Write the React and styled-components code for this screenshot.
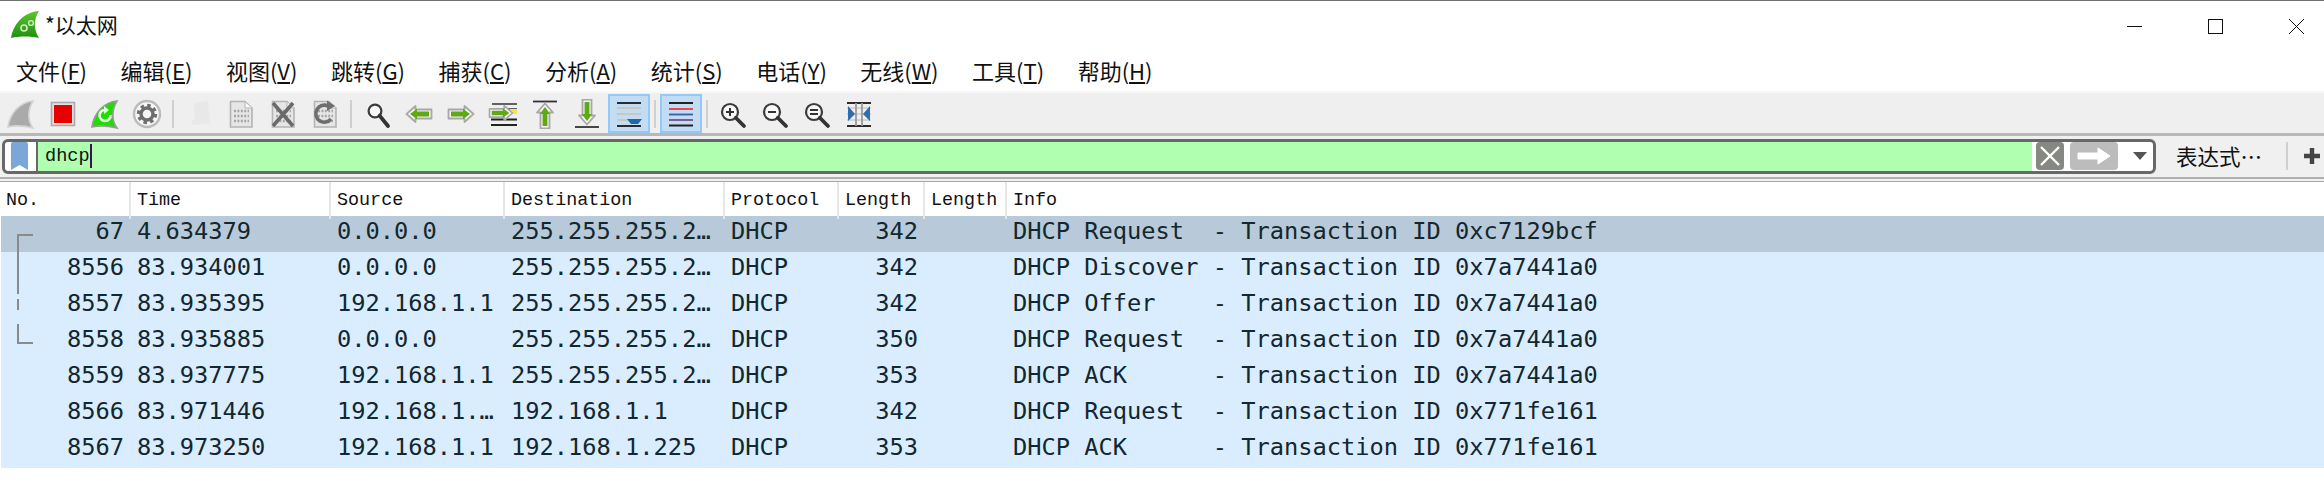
import React from 'react';
import styled, { createGlobalStyle } from 'styled-components';

const Global = createGlobalStyle`
  html, body { margin: 0; padding: 0; background: #fff; overflow: hidden; }
  * { box-sizing: border-box; }
`;
const CJK = `"Noto Sans CJK SC", "Noto Sans", sans-serif`;
const Window = styled.div`width: 2324px; height: 504px; background: #fff; border-top: 1px solid #707070; display: flex; flex-direction: column;`;
const TitleBar = styled.div`height: 44px; display: flex; align-items: center; padding: 3px 20px 0 11px;`;
const AppTitle = styled.div`font: 21px/1 ${CJK}; color: #111; margin-left: 4px; flex: 1;`;
const WinControls = styled.div`display: flex; gap: 66px; margin-top: 3px;`;
const MenuBar = styled.div`height: 46px; display: flex; align-items: center; padding: 3px 0 0 16px; gap: 33.5px; font: 22px/1 ${CJK}; color: #111;`;
const MenuItem = styled.span`white-space: nowrap; u { text-underline-offset: 2px; }`;
const Toolbar = styled.div`height: 45px; background: #efefef; border-top: 2px solid #f8f8f8; border-bottom: 3px solid #b8b8b8; display: flex; align-items: flex-end;`;
const ToolButton = styled.div`
  width: 42px; height: 39px; display: flex; align-items: center; justify-content: center; flex: none;
  ${p => p.$on ? 'background: #c2dcf3; border: 2px solid #92c9f7;' : ''}
`;
const ToolSep = styled.div`width: 10px; height: 39px; display: flex; justify-content: center; align-items: center; flex: none; &::after { content: ''; width: 2px; height: 28px; background: #cfcfcf; }`;
const FilterRow = styled.div`height: 42px; background: #f0f0f0; border-bottom: 1px solid #f0f0f0; display: flex; align-items: center; padding: 0 4px 1px 2px;`;
const FilterBox = styled.div`width: 2155px; height: 35px; border: 3px solid #686868; border-radius: 6px; background: #fff; display: flex; align-items: center; overflow: hidden;`;
const BookmarkCell = styled.div`width: 33px; height: 100%; border-right: 2px solid #686868; display: flex; justify-content: flex-start; padding-left: 6px; align-items: center; flex: none;`;
const FilterInput = styled.div`flex: 1; height: 100%; background: #b0ffb0; padding-left: 7px; font: 18.6px/29px "Liberation Mono", monospace; color: #111; display: flex; align-items: center;`;
const Caret = styled.span`width: 2px; height: 24px; background: #40104a;`;
const FilterTools = styled.div`display: flex; align-items: center; gap: 6px; padding: 0 6px 0 4px; flex: none;`;
const ClearBtn = styled.div`width: 28px; height: 28px; background: #868884; border-radius: 4px; display: flex; align-items: center; justify-content: center;`;
const ApplyBtn = styled.div`width: 48px; height: 28px; background: #bcbcbc; border-radius: 4px; display: flex; align-items: center; justify-content: center;`;
const DropIcon = styled.svg`margin-left: 9px;`;
const ExprLabel = styled.div`font: 21.5px/1 ${CJK}; color: #111; margin-left: 20px; width: 110px; white-space: nowrap;`;
const FilterSep = styled.div`width: 2px; height: 28px; background: #cfcfcf;`;
const PlusIcon = styled.svg`margin-left: 16px;`;
const TableRule = styled.div`height: 5px; background: #f0f0f0; border-top: 2px solid #b0b0b0; border-bottom: 1px solid #a9a5ad; margin-top: -1px;`;
const Table = styled.div`padding-left: 1px; position: relative;`;
const RowColumns = '129px 200px 174px 220px 114px 86px 82px 1fr';
const HeaderColumns = '130px 200px 174px 220px 114px 86px 82px 1fr';
const HeaderRow = styled.div`height: 34px; display: grid; grid-template-columns: ${HeaderColumns}; font: 18.4px/37px "Liberation Mono", monospace; color: #111;`;
const HeaderCell = styled.div`padding-left: ${p => p.$pad}px; border-right: 2px solid #e6e6e6; &:last-child { border-right: 0; }`;
const Row = styled.div`height: 36px; display: grid; grid-template-columns: ${RowColumns}; font: 23.7px/31px "DejaVu Sans Mono", monospace; color: #12272e; background: ${p => p.$sel ? '#b8cad9' : '#daedff'};`;
const Cell = styled.div`padding: 0 6px 0 7px; white-space: pre; text-align: ${p => p.$right ? 'right' : 'left'}; overflow: hidden;`;
const Tree = styled.svg`position: absolute; left: 16px; top: 52px;`;

const Svg = ({ children, w = 30, h = 30 }) => <svg width={w} height={h} viewBox={`0 0 ${w} ${h}`}>{children}</svg>;

const FinPath = 'M27 2 C15 3 4 13 2 28 C10 26 19 27 27 29 C21 21 22 10 27 2 Z';
const GrayFin = () => <Svg><path d={FinPath} fill="#aaa" stroke="#d4d4d4" strokeWidth="1.6" /></Svg>;
const Stop = () => <Svg><rect x="3.5" y="3.5" width="23" height="23" fill="#e2e2e2" stroke="#aaa" strokeWidth="1.6" /><rect x="6" y="6" width="18" height="18" fill="#e60000" /></Svg>;
const Restart = () => <Svg><path d={FinPath} fill="#20dd00" stroke="#9a9a9a" strokeWidth="1.6" /><path d="M20.5 16 A5.5 5.5 0 1 1 15 11" fill="none" stroke="#e8f8e8" strokeWidth="2.6" /><path d="M14 7 L19 11 L14 15 Z" fill="#e8f8e8" /></Svg>;
const Gear = () => <Svg>
  <circle cx="15" cy="15" r="13" fill="#f6f6f6" stroke="#bbb" strokeWidth="2.4" />
  <circle cx="15" cy="15" r="8.5" fill="none" stroke="#6e6e6e" strokeWidth="3.4" strokeDasharray="3.4 3.27" />
  <circle cx="15" cy="15" r="6" fill="none" stroke="#6e6e6e" strokeWidth="3.4" />
</Svg>;
const OpenFaint = () => <Svg><path d="M10 4 L24 2 L26 24 L9 26 L7 22 L11 20 Z" fill="#e8e8e8" /></Svg>;
const Doc = ({ children }) => <Svg>
  <path d="M4.5 2.5 H19 L26 9 V28 H4.5 Z" fill="#e6e6e6" stroke="#b4b4b4" strokeWidth="1.6" />
  <path d="M19 3 V9 H26" fill="#fafafa" stroke="#b4b4b4" strokeWidth="1" />
  <g stroke="#a6a6a6" strokeWidth="2.4" strokeDasharray="2 1.4"><path d="M8 12 H23 M8 17 H23 M8 22 H23" /></g>
  {children}
</Svg>;
const CloseFile = () => <Doc><path d="M5 4 L25 27 M25 4 L5 27" stroke="#6a6a6a" strokeWidth="3.6" /></Doc>;
const ReloadFile = () => <Doc><path d="M21 20 A8.5 8.5 0 1 1 18 7" fill="none" stroke="#6e6e6e" strokeWidth="3.6" /><path d="M17 1.5 L25 7 L17 12 Z" fill="#6e6e6e" /></Doc>;
const Arrow = ({ rot = 0, dx = 0, dy = 0, scale = 1 }) => <g transform={`translate(${dx} ${dy}) rotate(${rot} 15 15) translate(15 15) scale(${scale}) translate(-15 -15)`}>
  <path d="M2.5 15 L11.5 7 V10.5 H27.5 V19.5 H11.5 V23 Z" fill="#f4f4f4" stroke="#a8a8a8" strokeWidth="1.8" strokeLinejoin="round" />
  <path d="M6 15 L13 9.8 V12.6 H25 V17.4 H13 V20.2 Z" fill="#5fa915" />
</g>;
const Back = () => <Svg><Arrow /></Svg>;
const Forward = () => <Svg><Arrow rot={180} /></Svg>;
const Goto = () => <Svg>
  <path d="M4 5 H29 M4 10 H29" stroke="#333" strokeWidth="1.6" />
  <rect x="22" y="10" width="7" height="5" fill="#ffe14a" />
  <path d="M3 20.5 H29 M3 26 H29" stroke="#222" strokeWidth="1.8" />
  <Arrow rot={180} dx={-2} dy={-1} scale={0.92} />
</Svg>;
const Top = () => <Svg>
  <path d="M3 2.5 H27" stroke="#333" strokeWidth="1.8" />
  <Arrow rot={90} dy={2} />
</Svg>;
const Bottom = () => <Svg>
  <path d="M3 28 H27" stroke="#333" strokeWidth="1.8" />
  <Arrow rot={-90} dy={-2} />
</Svg>;
const Scroll = () => <Svg>
  <path d="M3 4 H27 M3 27 H27" stroke="#2b2b2b" strokeWidth="2" />
  <path d="M3 9 H27 M3 15 H27 M3 21 H27" stroke="#c8c8be" strokeWidth="2" />
  <path d="M13 20 H28 L24 25 H17 Z" fill="#1f66ab" />
</Svg>;
const Colorize = () => <Svg>
  <path d="M3 4 H27 M3 26.5 H27" stroke="#222" strokeWidth="1.8" />
  <path d="M3 10 H27" stroke="#e83b3b" strokeWidth="1.8" />
  <path d="M3 15.5 H27" stroke="#3560a4" strokeWidth="1.8" />
  <path d="M3 21 H27" stroke="#7c4a87" strokeWidth="1.8" />
</Svg>;
const Glass = ({ children, cx = 12, cy = 13, r = 8 }) => <Svg>
  <circle cx={cx} cy={cy} r={r} fill="#f8f8f8" stroke="#3b3b3b" strokeWidth="2.2" />
  <path d={`M${cx + r * 0.72} ${cy + r * 0.72} L26 27`} stroke="#333" strokeWidth="3.8" strokeLinecap="round" />
  {children}
</Svg>;
const Find = () => <Glass cx={13} cy={12} r={6.4} />;
const ZoomIn = () => <Glass><path d="M8 13 H16 M12 9 V17" stroke="#333" strokeWidth="2" /></Glass>;
const ZoomOut = () => <Glass><path d="M8 13 H16" stroke="#333" strokeWidth="2" /></Glass>;
const ZoomNorm = () => <Glass><path d="M8 11 H16 M8 15 H16" stroke="#333" strokeWidth="2" /></Glass>;
const Resize = () => <Svg>
  <path d="M3 9 H27 M3 15 H27 M3 21 H27" stroke="#d4d4d0" strokeWidth="2" />
  <path d="M3 4 H27 M3 27 H27" stroke="#2b2b2b" strokeWidth="1.8" />
  <path d="M12 4 V27 M18 4 V27" stroke="#9a9a9a" strokeWidth="1.8" />
  <path d="M4 7 L11 15 L4 22 Z M26 7 L19 15 L26 22 Z" fill="#2f6cb0" />
</Svg>;

const Logo = () => <svg width="30" height="28" viewBox="0 0 30 28">
  <defs><linearGradient id="lg" x1="0" y1="0" x2="0" y2="1"><stop offset="0" stopColor="#5fc52c" /><stop offset="1" stopColor="#1f8f12" /></linearGradient></defs>
  <path d="M28 0 C14 1 3 11 0 27 C9 25 19 25 28 27 C23 19 22 9 28 0 Z" fill="url(#lg)" />
  <circle cx="13" cy="17" r="3" fill="none" stroke="#cfeec4" strokeWidth="1.6" />
  <circle cx="20" cy="12" r="2.4" fill="none" stroke="#cfeec4" strokeWidth="1.4" />
</svg>;

const menu = [['文件', 'F'], ['编辑', 'E'], ['视图', 'V'], ['跳转', 'G'], ['捕获', 'C'], ['分析', 'A'], ['统计', 'S'], ['电话', 'Y'], ['无线', 'W'], ['工具', 'T'], ['帮助', 'H']];
const tools = [GrayFin, Stop, Restart, Gear, 'sep', OpenFaint, Doc, CloseFile, ReloadFile, 'sep', Find, Back, Forward, Goto, Top, Bottom, 'scroll', 'sep', 'color', 'sep', ZoomIn, ZoomOut, ZoomNorm, Resize];
const headers = ['No.', 'Time', 'Source', 'Destination', 'Protocol', 'Length', 'Length', 'Info'];
const rows = [
  ['67', '4.634379', '0.0.0.0', '255.255.255.2…', 'DHCP', '342', '', 'DHCP Request  - Transaction ID 0xc7129bcf'],
  ['8556', '83.934001', '0.0.0.0', '255.255.255.2…', 'DHCP', '342', '', 'DHCP Discover - Transaction ID 0x7a7441a0'],
  ['8557', '83.935395', '192.168.1.1', '255.255.255.2…', 'DHCP', '342', '', 'DHCP Offer    - Transaction ID 0x7a7441a0'],
  ['8558', '83.935885', '0.0.0.0', '255.255.255.2…', 'DHCP', '350', '', 'DHCP Request  - Transaction ID 0x7a7441a0'],
  ['8559', '83.937775', '192.168.1.1', '255.255.255.2…', 'DHCP', '353', '', 'DHCP ACK      - Transaction ID 0x7a7441a0'],
  ['8566', '83.971446', '192.168.1.…', '192.168.1.1', 'DHCP', '342', '', 'DHCP Request  - Transaction ID 0x771fe161'],
  ['8567', '83.973250', '192.168.1.1', '192.168.1.225', 'DHCP', '353', '', 'DHCP ACK      - Transaction ID 0x771fe161'],
];

export default function App() {
  return (
    <Window>
      <Global />
      <TitleBar>
        <Logo />
        <AppTitle>*以太网</AppTitle>
        <WinControls>
          <svg width="15" height="15"><path d="M0 7.5 H15" stroke="#111" strokeWidth="1" /></svg>
          <svg width="15" height="15"><rect x="0.5" y="0.5" width="14" height="14" fill="none" stroke="#111" /></svg>
          <svg width="15" height="15"><path d="M0 0 L15 15 M15 0 L0 15" stroke="#111" strokeWidth="1" /></svg>
        </WinControls>
      </TitleBar>
      <MenuBar>
        {menu.map(([t, k]) => <MenuItem key={k}>{t}(<u>{k}</u>)</MenuItem>)}
      </MenuBar>
      <Toolbar>
        {tools.map((T, i) => {
          if (T === 'sep') return <ToolSep key={i} />;
          if (T === 'scroll') return <ToolButton key={i} $on><Scroll /></ToolButton>;
          if (T === 'color') return <ToolButton key={i} $on><Colorize /></ToolButton>;
          return <ToolButton key={i}><T /></ToolButton>;
        })}
      </Toolbar>
      <FilterRow>
        <FilterBox>
          <BookmarkCell>
            <svg width="17" height="28"><path d="M0 2 Q0 0 2 0 H15 Q17 0 17 2 V28 L8.5 23 L0 28 Z" fill="#7aa6d8" /></svg>
          </BookmarkCell>
          <FilterInput>dhcp<Caret /></FilterInput>
          <FilterTools>
            <ClearBtn><svg width="22" height="22"><path d="M2 2 L20 20 M20 2 L2 20" stroke="#fff" strokeWidth="2.4" /></svg></ClearBtn>
            <ApplyBtn><svg width="34" height="18"><path d="M1 6 H21 V1 L33 9 L21 17 V12 H1 Z" fill="#fff" stroke="#fff" strokeLinejoin="round" /></svg></ApplyBtn>
            <DropIcon width="14" height="8"><path d="M0 0 H14 L7 8 Z" fill="#555" /></DropIcon>
          </FilterTools>
        </FilterBox>
        <ExprLabel>表达式…</ExprLabel>
        <FilterSep />
        <PlusIcon width="16" height="16"><path d="M8 0 V16 M0 8 H16" stroke="#444" strokeWidth="4.4" /></PlusIcon>
      </FilterRow>
      <TableRule />
      <Table>
        <HeaderRow>
          {headers.map((h, i) => <HeaderCell key={i} $pad={i === 0 ? 5 : 6}>{h}</HeaderCell>)}
        </HeaderRow>
        {rows.map((r, i) => (
          <Row key={r[0]} $sel={i === 0}>
            {r.map((c, j) => <Cell key={j} $right={j === 0 || j === 5}>{c}</Cell>)}
          </Row>
        ))}
        <Tree width="18" height="112">
          <path d="M17 1 H2 V60 M2 65 V76 M2 90 V109 H17" fill="none" stroke="#8a8a8a" strokeWidth="2" />
        </Tree>
      </Table>
    </Window>
  );
}
